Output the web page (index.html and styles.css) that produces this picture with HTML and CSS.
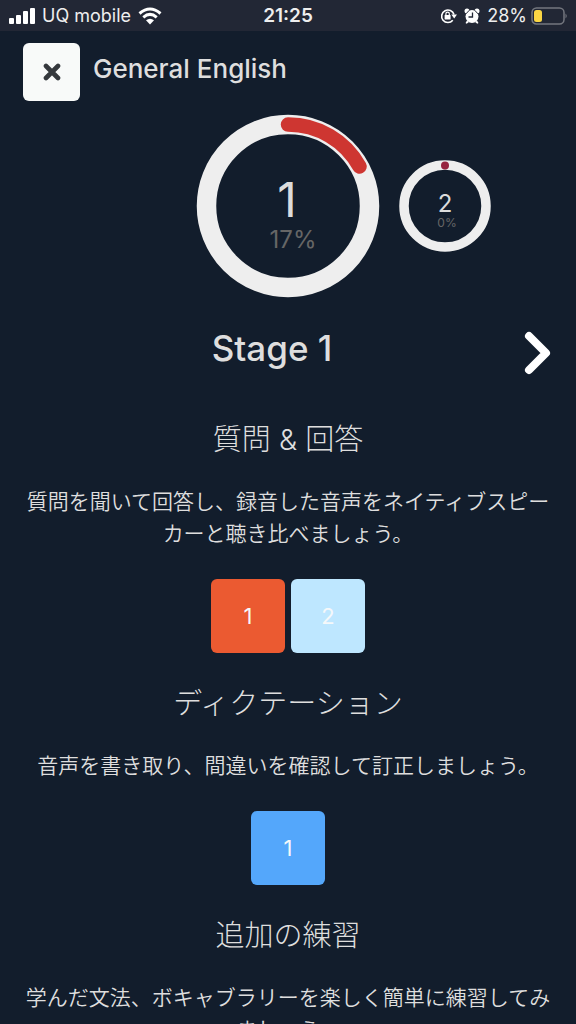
FILE: index.html
```html
<!DOCTYPE html>
<html lang="ja">
<head>
<meta charset="utf-8">
<meta name="viewport" content="width=device-width, initial-scale=1">
<title>General English</title>
<link rel="stylesheet" href="styles.css">
</head>
<body>
<div class="status">
  <div class="status-left">
    <svg width="26" height="18" viewBox="0 0 26 18" fill="#fff" aria-hidden="true"><rect y="11" width="5" height="6" rx="1"/><rect x="7" y="8" width="5" height="9" rx="1"/><rect x="14" y="4" width="5" height="13" rx="1"/><rect x="21" y="1" width="5" height="16" rx="1"/></svg>
    <span>UQ mobile</span>
    <svg width="24" height="18" viewBox="0 0 24 18" fill="none" stroke="#fff" stroke-width="3" aria-hidden="true"><path d="M1.500 6.500Q12-2.500 22.500 6.500M5.300 10.300Q12 4.500 18.700 10.300"/><path d="M12 17.500L8 13.300Q12 10 16 13.300Z" fill="#fff" stroke="none"/></svg>
  </div>
  <time class="status-time">21:25</time>
  <div class="status-right">
    <svg width="17" height="16" viewBox="0 0 17 16" fill="none" stroke="#fff" aria-hidden="true"><path d="M12.800 12.300A6.300 6.300 0 1 1 14 6.500" stroke-width="1.600"/><path d="M11.300 6.500H17L14.200 10.500Z" fill="#fff" stroke="none"/><rect x="4.600" y="7" width="6" height="4.600" rx=".6" fill="#fff" stroke="none"/><path d="M5.900 7.500V5.800a1.700 1.700 0 0 1 3.400 0V7.500" stroke-width="1.200"/></svg>
    <svg width="16" height="16" viewBox="0 0 16 16" aria-hidden="true"><g fill="#fff"><circle cx="8" cy="8.500" r="6.500"/><circle cx="3" cy="3" r="2.500"/><circle cx="13" cy="3" r="2.500"/><path d="M3 12.500L1.500 15l1.200.8L5 14zM13 12.500l1.500 2.500-1.200.8L11 14z"/></g><path d="M2 5.800L5.400 2.200M14 5.800L10.600 2.200" stroke="#222735"/><path d="M8.500 4.500V9H4.500" fill="none" stroke="#222735" stroke-width="1.300"/></svg>
    <span class="charge">28%<svg width="36" height="20" viewBox="0 0 36 20" aria-hidden="true"><rect x="1" y="2" width="32" height="16" rx="4.500" fill="none" stroke="#74777f" stroke-width="1.500"/><rect x="3" y="4" width="8" height="12" rx="2.500" fill="#fbd644"/><path d="M34.500 7.500q2.500 2.500 0 5z" fill="#74777f"/></svg></span>
  </div>
</div>
<header class="bar">
  <button class="close" type="button" aria-label="Close"><svg width="18" height="18" viewBox="0 0 18 18" fill="none" stroke="#35393d" stroke-width="4.600" stroke-linecap="round"><path d="M3 3L15 15M15 3L3 15"/></svg></button>
  <h1 class="course">General English</h1>
</header>
<main>
  <div class="rings">
    <svg class="ring-main" width="184" height="184" viewBox="0 0 184 184" role="img" aria-label="Stage 1, 17%">
      <circle cx="92" cy="92" r="81.500" fill="none" stroke="#eee" stroke-width="19.500"/>
      <path d="M92 10.500A81.500 81.500 0 0 1 163.500 52.500" fill="none" stroke="#ce3631" stroke-width="14.500" stroke-linecap="round"/>
      <text class="num num-main" x="91" y="103">1</text>
      <text class="percent percent-main" x="97" y="134">17%</text>
    </svg>
    <svg class="ring-next" width="92" height="92" viewBox="0 0 92 92" role="img" aria-label="Stage 2, 0%">
      <circle cx="46" cy="46" r="41" fill="none" stroke="#eee" stroke-width="9.500"/>
      <circle cx="46" cy="5.500" r="4" fill="#972440"/>
      <text class="num num-next" x="46" y="52">2</text>
      <text class="percent percent-next" x="48" y="67">0%</text>
    </svg>
  </div>
  <div class="stage">
    <h2 class="stage-title">Stage 1</h2>
    <button class="next" type="button" aria-label="Next stage"><svg width="28" height="44" viewBox="0 0 28 44" fill="none" stroke="#fff" stroke-width="8" stroke-linejoin="round"><path d="M5 5L22 22L5 39" stroke-linecap="round"/></svg></button>
  </div>
  <section class="section">
    <h3 class="heading">質問 &amp; 回答</h3>
    <p class="text">質問を聞いて回答し、録音した音声をネイティブスピーカーと聴き比べましょう。</p>
    <div class="tiles"><button class="tile orange" type="button">1</button><button class="tile pale" type="button">2</button></div>
  </section>
  <section class="section">
    <h3 class="heading">ディクテーション</h3>
    <p class="text">音声を書き取り、間違いを確認して訂正しましょう。</p>
    <div class="tiles"><button class="tile blue" type="button">1</button></div>
  </section>
  <section class="section">
    <h3 class="heading">追加の練習</h3>
    <p class="text">学んだ文法、ボキャブラリーを楽しく簡単に練習してみましょう。</p>
  </section>
</main>
</body>
</html>
```

FILE: styles.css
```css
* { box-sizing: border-box; }

html { scrollbar-width: none; }

body {
  margin: 0;
  background: #121d2c;
  color: #dedede;
  font-family: Inter, "Noto Sans CJK JP", sans-serif;
}

h1, h2, h3, p { margin: 0; }

svg { display: block; flex: none; }

button {
  padding: 0;
  border: 0;
  background: none;
  font: inherit;
  cursor: pointer;
}

.status {
  display: grid;
  grid-template-columns: 1fr auto 1fr;
  align-items: center;
  height: 31px;
  padding: 0 9px;
  background: #222735;
  color: #eee;
  font-size: 18px;
}

.status-left, .status-right {
  display: flex;
  align-items: center;
  gap: 7px;
}

.status-right { justify-content: flex-end; }

.status-time { font-size: 19px; font-weight: 600; }

.charge {
  display: flex;
  align-items: center;
  gap: 4px;
}

.bar {
  display: flex;
  align-items: center;
  gap: 13px;
  padding: 12px 23px 13px;
}

.close {
  display: flex;
  align-items: center;
  justify-content: center;
  width: 57px;
  height: 58px;
  border-radius: 6px;
  background: #f8faf9;
}

.course {
  padding-bottom: 6px;
  font-size: 26px;
  font-weight: 500;
  line-height: 32px;
}

.rings {
  display: grid;
  grid-template-columns: 1fr auto 1fr;
  align-items: center;
  overflow: hidden;
}

.ring-main { grid-column: 2; }

.ring-next { margin-left: 19px; }

.num, .percent { text-anchor: middle; }

.num { fill: #dcdcdc; }

.num-main { font-size: 48px; }

.num-next { font-size: 24px; }

.percent { fill: #666; }

.percent-main { font-size: 24px; }

.percent-next { font-size: 12px; }

.stage {
  display: flex;
  align-items: center;
  padding: 29px 24px 0 20px;
}

.stage-title {
  flex: 1;
  padding-bottom: 10px;
  font-size: 35px;
  font-weight: 500;
  line-height: 42px;
  text-align: center;
}

.section {
  padding: 0 24px 34px;
  text-align: center;
}

.stage + .section { padding-top: 44px; }

.heading {
  margin-bottom: 29px;
  font-size: 29px;
  font-weight: 300;
  line-height: 34px;
}

.text {
  font-size: 21px;
  font-weight: 350;
  line-height: 32px;
  line-break: anywhere;
}

.tiles {
  display: flex;
  justify-content: center;
  gap: 6px;
  margin-top: 29px;
}

.tile {
  width: 74px;
  height: 74px;
  border-radius: 6px;
  color: #f5f8fa;
  font-size: 22px;
}

.orange { background: #eb5a31; }

.pale { background: #bee7ff; }

.blue { background: #54a7fb; }
```
